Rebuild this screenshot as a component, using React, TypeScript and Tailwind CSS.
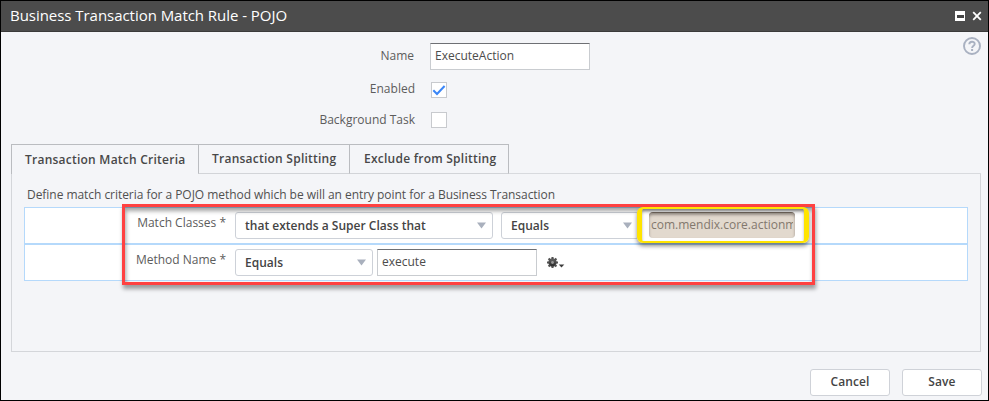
import React from "react";

const field =
  "h-[27px] border border-[#c9ccd0] border-t-[#6e7074] bg-white pl-1 text-[12px] leading-[23px] text-[#4c4c4c] whitespace-nowrap overflow-hidden";

function Select({ label, className }: { label: string; className: string }) {
  return (
    <div
      className={`flex h-[27px] shrink-0 items-center justify-between rounded-[3px] border border-[#cdd1d8] bg-white pl-[9px] pr-[6px] text-[12px] font-semibold tracking-[0.02px] text-[#444] whitespace-nowrap ${className}`}
    >
      <span>{label}</span>
      <svg width="9" height="7" viewBox="0 0 9 7">
        <path d="M0 0.5h9L4.5 6.5z" fill="#a9b0bd" />
      </svg>
    </div>
  );
}

function Label({ children, className }: { children: React.ReactNode; className: string }) {
  return (
    <div className={`shrink-0 text-right text-[12px] leading-[16px] text-[#5c5c5c] whitespace-nowrap ${className}`}>
      {children}
    </div>
  );
}

function Checkbox({ checked }: { checked?: boolean }) {
  return (
    <div className="size-4 border border-[#c8cace] bg-white">
      {checked && (
        <svg width="14" height="14" viewBox="0 0 14 14" className="block">
          <path d="M1.3 7.2L5 11L12.6 3" fill="none" stroke="#3b86f7" strokeWidth="2" />
        </svg>
      )}
    </div>
  );
}

function Gear() {
  return (
    <svg width="18" height="12" viewBox="0 0 18 12" className="block">
      <defs>
        <linearGradient id="gear" x1="0" y1="0" x2="0" y2="1">
          <stop offset="0" stopColor="#6b6b6b" />
          <stop offset="1" stopColor="#222" />
        </linearGradient>
      </defs>
      <circle cx="5.5" cy="5.5" r="4.2" fill="url(#gear)" />
      <g stroke="#505050" strokeWidth="2.1">
        <path d="M5.5 0v2.2M5.5 8.8v2.2M0 5.5h2.2M8.8 5.5h2.2M1.6 1.6l1.6 1.6M7.8 7.8l1.6 1.6M9.4 1.6L7.8 3.2M3.2 7.8L1.6 9.4" />
      </g>
      <circle cx="5.5" cy="5.5" r="1.4" fill="#999" />
      <path d="M11.7 7.4h5.6L14.5 10.6z" fill="#3c3c3c" />
    </svg>
  );
}

export default function App() {
  return (
    <div className="relative flex h-[401px] w-[989px] flex-col overflow-hidden border border-black bg-[#f4f5f8] font-['Open_Sans',sans-serif]">
      <header className="flex h-[31px] shrink-0 items-center justify-between border-b border-[#3a3a3a] bg-[#4c4c4c] pl-[9px] pr-[6px]">
        <h1 className="-mt-px text-[15px] leading-[29px] tracking-[-0.04px] text-white">
          Business Transaction Match Rule - POJO
        </h1>
        <div className="flex items-center gap-[7px] -mt-px">
          <svg width="10" height="10" viewBox="0 0 10 10">
            <path d="M0 0h10v10H0z" fill="#fff" />
            <path d="M2 4h7v3H2z" fill="#444" />
          </svg>
          <svg width="10" height="10" viewBox="0 0 10 10">
            <path d="M1.2 1.2l7.6 7.6M8.8 1.2l-7.6 7.6" stroke="#fff" strokeWidth="1.8" />
          </svg>
        </div>
      </header>

      <div className="flex h-[112px] shrink-0 justify-between pr-[6px]">
        <div className="flex flex-col pt-[11px]">
          <div className="flex h-[39px] items-start">
            <Label className="mr-4 w-[413px] pt-[5px]">Name</Label>
            <div className={`w-[160px] ${field}`}>ExecuteAction</div>
          </div>
          <div className="flex h-[30px] items-start">
            <Label className="mr-4 w-[414px] -mt-px">Enabled</Label>
            <Checkbox checked />
          </div>
          <div className="flex items-start">
            <Label className="mr-4 w-[414px]">Background Task</Label>
            <Checkbox />
          </div>
        </div>
        <svg width="20" height="20" viewBox="0 0 20 20" className="mt-1">
          <circle cx="10" cy="10" r="8" fill="none" stroke="#a9b1c1" strokeWidth="1.9" />
          <path d="M7.3 8.2C7.3 5 12.7 5 12.7 8C12.7 9.8 10.1 9.8 10.1 12" fill="none" stroke="#a9b1c1" strokeWidth="1.9" />
          <path d="M9.1 13h2v2h-2z" fill="#a9b1c1" />
        </svg>
      </div>

      <div className="ml-[10px] flex h-[30px] w-[970px] shrink-0 text-[12px] font-semibold tracking-[0.24px] text-[#484848]">
        <div className="w-[187px] border-l border-t border-[#babcc0] pl-[13px] pt-[6px] leading-[18px]">
          Transaction Match Criteria
        </div>
        <div className="w-[151px] border-b border-l border-t border-[#babcc0] border-b-[#d2d4d8] pl-[13px] pt-[5px] leading-[18px]">
          Transaction Splitting
        </div>
        <div className="w-[160px] border-x border-b border-t border-[#babcc0] border-b-[#d2d4d8] pl-[14px] pt-[5px] leading-[18px]">
          Exclude from Splitting
        </div>
        <div className="flex-1 border-b border-[#d8dade]" />
      </div>

      <main className="ml-[10px] flex h-[178px] w-[970px] shrink-0 flex-col border-x border-b border-[#d4d6da] pl-3 pr-3 pt-3">
        <p className="pl-[3px] text-[12px] leading-[18px] tracking-[-0.047px] text-[#505050]">
          Define match criteria for a POJO method which be will an entry point for a Business Transaction
        </p>
        <div className="mt-[3px] flex h-[37px] shrink-0 items-start border border-[#b5d9fb] bg-white pt-1">
          <Label className="mr-[9px] w-[201px] pt-[3px]">Match Classes *</Label>
          <Select label="that extends a Super Class that" className="w-[258px]" />
          <Select label="Equals" className="ml-2 w-[138px]" />
          <div className="ml-[10px] h-[26px] w-[146px] overflow-hidden rounded-[4px] border-t border-[#75695f] bg-[#e2d9ce] pl-[2px] text-[12px] leading-[24px] text-[#82786d] shadow-[inset_0_2px_3px_#9b928a] whitespace-nowrap">
            <div className="w-[142px] overflow-hidden">com.mendix.core.actionm</div>
          </div>
        </div>
        <div className="flex h-[37px] shrink-0 items-start border border-[#b5d9fb] bg-white pt-1">
          <Label className="mr-[9px] w-[201px] pt-[3px]">Method Name *</Label>
          <Select label="Equals" className="w-[138px]" />
          <div className={`ml-1 w-[160px] ${field}`}>execute</div>
          <div className="ml-[10px] mt-2">
            <Gear />
          </div>
        </div>
      </main>

      <footer className="mt-[17px] flex justify-end gap-3 pr-[6px] text-[12px] font-semibold tracking-[0.1px] text-[#444]">
        <button className="h-[27px] w-[80px] rounded-[3px] border border-[#cfd2d8] bg-white pb-[2px]">Cancel</button>
        <button className="h-[27px] w-[80px] rounded-[3px] border border-[#cfd2d8] bg-white pb-[2px]">Save</button>
      </footer>

      <div className="pointer-events-none absolute left-[121px] top-[203px] h-[81px] w-[693px] border-[3px] border-[#ff4141] shadow-[1px_4px_4px_rgba(0,0,0,0.36),inset_1px_4px_4px_rgba(0,0,0,0.36)]" />
      <div className="pointer-events-none absolute left-[636px] top-[206px] h-[36px] w-[172px] rounded-[6px] border-x-[5px] border-b-2 border-t-2 border-[#ffe400] shadow-[0_3px_4px_rgba(0,0,0,0.45),inset_0_2px_3px_rgba(0,0,0,0.3)]" />
    </div>
  );
}
